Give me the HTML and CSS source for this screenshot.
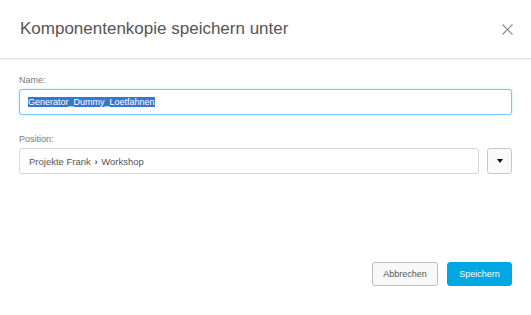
FILE: index.html
```html
<!DOCTYPE html>
<html lang="de">
<head>
  <meta charset="UTF-8" />
  <title>Komponentenkopie speichern unter</title>
  <link rel="stylesheet" href="styles.css">
</head>
<body>

  <div class="dialog">
    <header class="dialog-header">
      <h1>Komponentenkopie speichern unter</h1>
      <button class="close" aria-label="Schließen">
        <svg width="11" height="11" viewBox="0 0 11 11">
          <path d="M0.5 0.5 L10.5 10.5 M10.5 0.5 L0.5 10.5" stroke="#8a8a8a" stroke-width="1.1" fill="none"/>
        </svg>
      </button>
    </header>

    <div class="dialog-body">
      <label class="label">Name:</label>
      <div class="field focused"><span class="selected">Generator_Dummy_Loetfahnen</span></div>

      <label class="label second">Position:</label>
      <div class="row">
        <div class="field path"><span>Projekte Frank <span class="sep">&#8250;</span> Workshop</span></div>
        <button class="dropdown" aria-label="Auswählen"><span class="caret"></span></button>
      </div>
    </div>

    <footer class="dialog-footer">
      <button class="btn btn-default">Abbrechen</button>
      <button class="btn btn-primary">Speichern</button>
    </footer>
  </div>

</body>
</html>
```

FILE: styles.css
```css
body {
  margin: 0;
  padding: 0;
  font-family: 'Liberation Sans', Arial, sans-serif;
  background: #fff;
  color: #555;
}

.dialog {
  height: 315px;
  display: flex;
  flex-direction: column;
  box-sizing: border-box;
}

.dialog-header {
  height: 58px;
  display: flex;
  align-items: center;
  justify-content: space-between;
  padding: 0 18px 0 20px;
  border-bottom: 1px solid #e3e3e3;
  box-shadow: 0 1px 1px rgba(0,0,0,0.03);
}

.dialog-header h1 {
  margin: 0;
  font-size: 17px;
  font-weight: normal;
  color: #555;
}

.close {
  border: none;
  background: none;
  padding: 0;
  width: 11px;
  height: 11px;
  display: flex;
  cursor: pointer;
}

.dialog-body {
  padding: 14px 19px 0 19px;
}

.label {
  display: block;
  font-size: 9px;
  line-height: 14px;
  color: #777;
  margin-bottom: 2px;
}

.label.second {
  margin-top: 17px;
}

.field {
  height: 26px;
  box-sizing: border-box;
  border: 1px solid #d6d6d6;
  border-radius: 3px;
  padding: 0 8px;
  display: flex;
  align-items: center;
  font-size: 9px;
  color: #555;
  background: #fff;
}

.field.focused {
  border-color: #7cc8ef;
  box-shadow: 0 0 2px rgba(102, 190, 235, 0.6);
}

.selected {
  background: #3478d4;
  color: #fff;
  line-height: 10px;
}

.row {
  display: flex;
  gap: 8px;
}

.path {
  flex: 1;
  padding-left: 9px;
  font-size: 9.5px;
}

.sep {
  font-weight: bold;
  margin: 0 1px;
}

.dropdown {
  width: 25px;
  height: 26px;
  box-sizing: border-box;
  border: 1px solid #c8c8c8;
  border-radius: 3px;
  background: #fafafa;
  padding: 0;
  display: flex;
  align-items: center;
  justify-content: center;
  cursor: pointer;
}

.caret {
  width: 0;
  height: 0;
  border-left: 3px solid transparent;
  border-right: 3px solid transparent;
  border-top: 4px solid #111;
}

.dialog-footer {
  margin-top: auto;
  display: flex;
  justify-content: flex-end;
  gap: 9px;
  padding: 0 19px 29px 0;
}

.btn {
  height: 24px;
  box-sizing: border-box;
  font-family: inherit;
  font-size: 9px;
  border-radius: 3px;
  padding: 0;
  cursor: pointer;
}

.btn-default {
  width: 66px;
  background: #f8f8f8;
  border: 1px solid #bdbdbd;
  color: #555;
}

.btn-primary {
  width: 65px;
  background: #00a7e3;
  border: 1px solid #00a7e3;
  color: #fff;
}
```
